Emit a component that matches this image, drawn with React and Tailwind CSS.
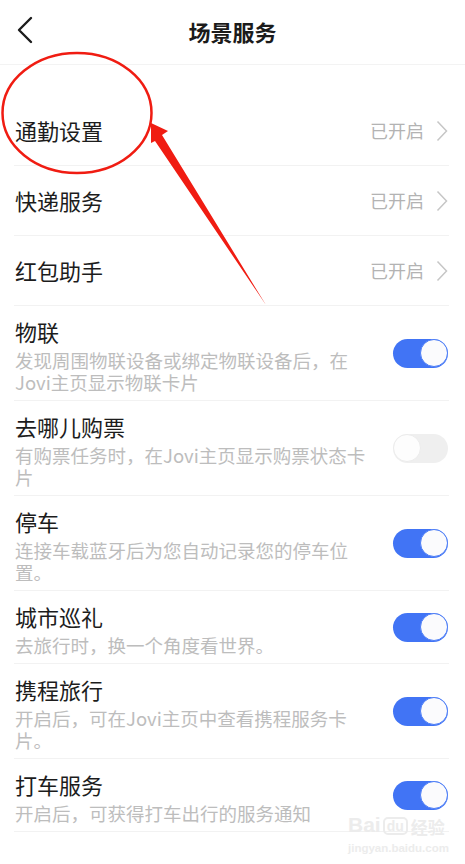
import React from 'react';

const linkRows = [
  { title: '通勤设置', status: '已开启' },
  { title: '快递服务', status: '已开启' },
  { title: '红包助手', status: '已开启' },
];

const toggleRows = [
  { title: '物联', desc: '发现周围物联设备或绑定物联设备后，在Jovi主页显示物联卡片', on: true },
  { title: '去哪儿购票', desc: '有购票任务时，在Jovi主页显示购票状态卡片', on: false },
  { title: '停车', desc: '连接车载蓝牙后为您自动记录您的停车位置。', on: true },
  { title: '城市巡礼', desc: '去旅行时，换一个角度看世界。', on: true },
  { title: '携程旅行', desc: '开启后，可在Jovi主页中查看携程服务卡片。', on: true },
  { title: '打车服务', desc: '开启后，可获得打车出行的服务通知', on: true },
];

const Toggle = ({ on }) =>
  on ? (
    <div className="w-[55px] h-[29px] rounded-full bg-[#4174f5] flex items-center justify-end">
      <div className="w-[28px] h-[28px] rounded-full bg-[#fbfbfd] border-[1.5px] border-[#4d7ef7]" />
    </div>
  ) : (
    <div className="w-[55px] h-[29px] rounded-full bg-[#efefef] flex items-center justify-start">
      <div className="w-[28px] h-[28px] rounded-full bg-[#fdfdfd] border border-[#ececec]" />
    </div>
  );

export default function App() {
  return (
    <div className="relative w-[465px] h-[864px] overflow-hidden bg-white font-['Noto_Sans_CJK_SC',sans-serif]">
      {/* header */}
      <div className="relative h-[65px] flex items-center justify-center border-b border-[#f3f3f3]">
        <svg className="absolute left-0 top-0" width="50" height="60" viewBox="0 0 50 60">
          <polyline points="31,18 19,30 31,42" fill="none" stroke="#1c1c1c" strokeWidth="2.4" strokeLinecap="round" strokeLinejoin="round" />
        </svg>
        <span className="text-[22px] font-semibold text-[#1b1b1b] -mt-[2px]">场景服务</span>
      </div>

      <div className="h-[31px]" />

      <div className="pl-[14px] pr-[16px]">
        {linkRows.map((r) => (
          <div key={r.title} className="h-[70px] flex items-center justify-between border-b border-[#f2f2f2]">
            <span className="pl-[1px] text-[22px] text-[#1c1c1c]">{r.title}</span>
            <div className="flex items-center gap-[12px]">
              <span className="text-[18px] text-[#b3b3b3]">{r.status}</span>
              <svg width="12" height="22" viewBox="0 0 12 22" className="mr-[1px]">
                <polyline points="1.5,1.5 10.5,11 1.5,20.5" fill="none" stroke="#c6c6c6" strokeWidth="1.5" />
              </svg>
            </div>
          </div>
        ))}

        {toggleRows.map((r) => (
          <div key={r.title} className="flex items-center justify-between pt-[10px] pb-[7px] border-b border-[#f2f2f2]">
            <div className="pl-[1px] w-[354px]">
              <div className="text-[22px] leading-[30px] text-[#1c1c1c]">{r.title}</div>
              <div className="mt-[3px] text-[18.5px] leading-[22px] text-[#bdbdbd]">{r.desc}</div>
            </div>
            <div className="-mt-[3px] mr-[1px]">
              <Toggle on={r.on} />
            </div>
          </div>
        ))}
      </div>

      {/* watermark */}
      <div className="absolute left-[348px] top-[814px] flex flex-col items-start text-[#ececec] pointer-events-none">
        <div className="flex items-end leading-none">
          <span className="font-['Liberation_Sans',sans-serif] font-bold text-[21px]">Bai</span>
          <span className="ml-[2px] px-[2px] rounded-[5px] border-2 border-[#ececec] font-['Liberation_Sans',sans-serif] font-bold text-[14px]">du</span>
          <span className="ml-[3px] text-[17px] font-bold">经验</span>
        </div>
        <span className="mt-[5px] font-['Liberation_Sans',sans-serif] text-[11.5px] font-bold">jingyan.baidu.com</span>
      </div>

      {/* red annotation */}
      <svg className="absolute left-0 top-0 pointer-events-none" width="465" height="864" viewBox="0 0 465 864">
        <ellipse cx="77" cy="113" rx="74.5" ry="60" fill="none" stroke="#f01c12" strokeWidth="2.5" />
        <polygon points="151,123 168,131 162,135 266,305 155,141 151,143" fill="#f01c12" />
      </svg>
    </div>
  );
}
